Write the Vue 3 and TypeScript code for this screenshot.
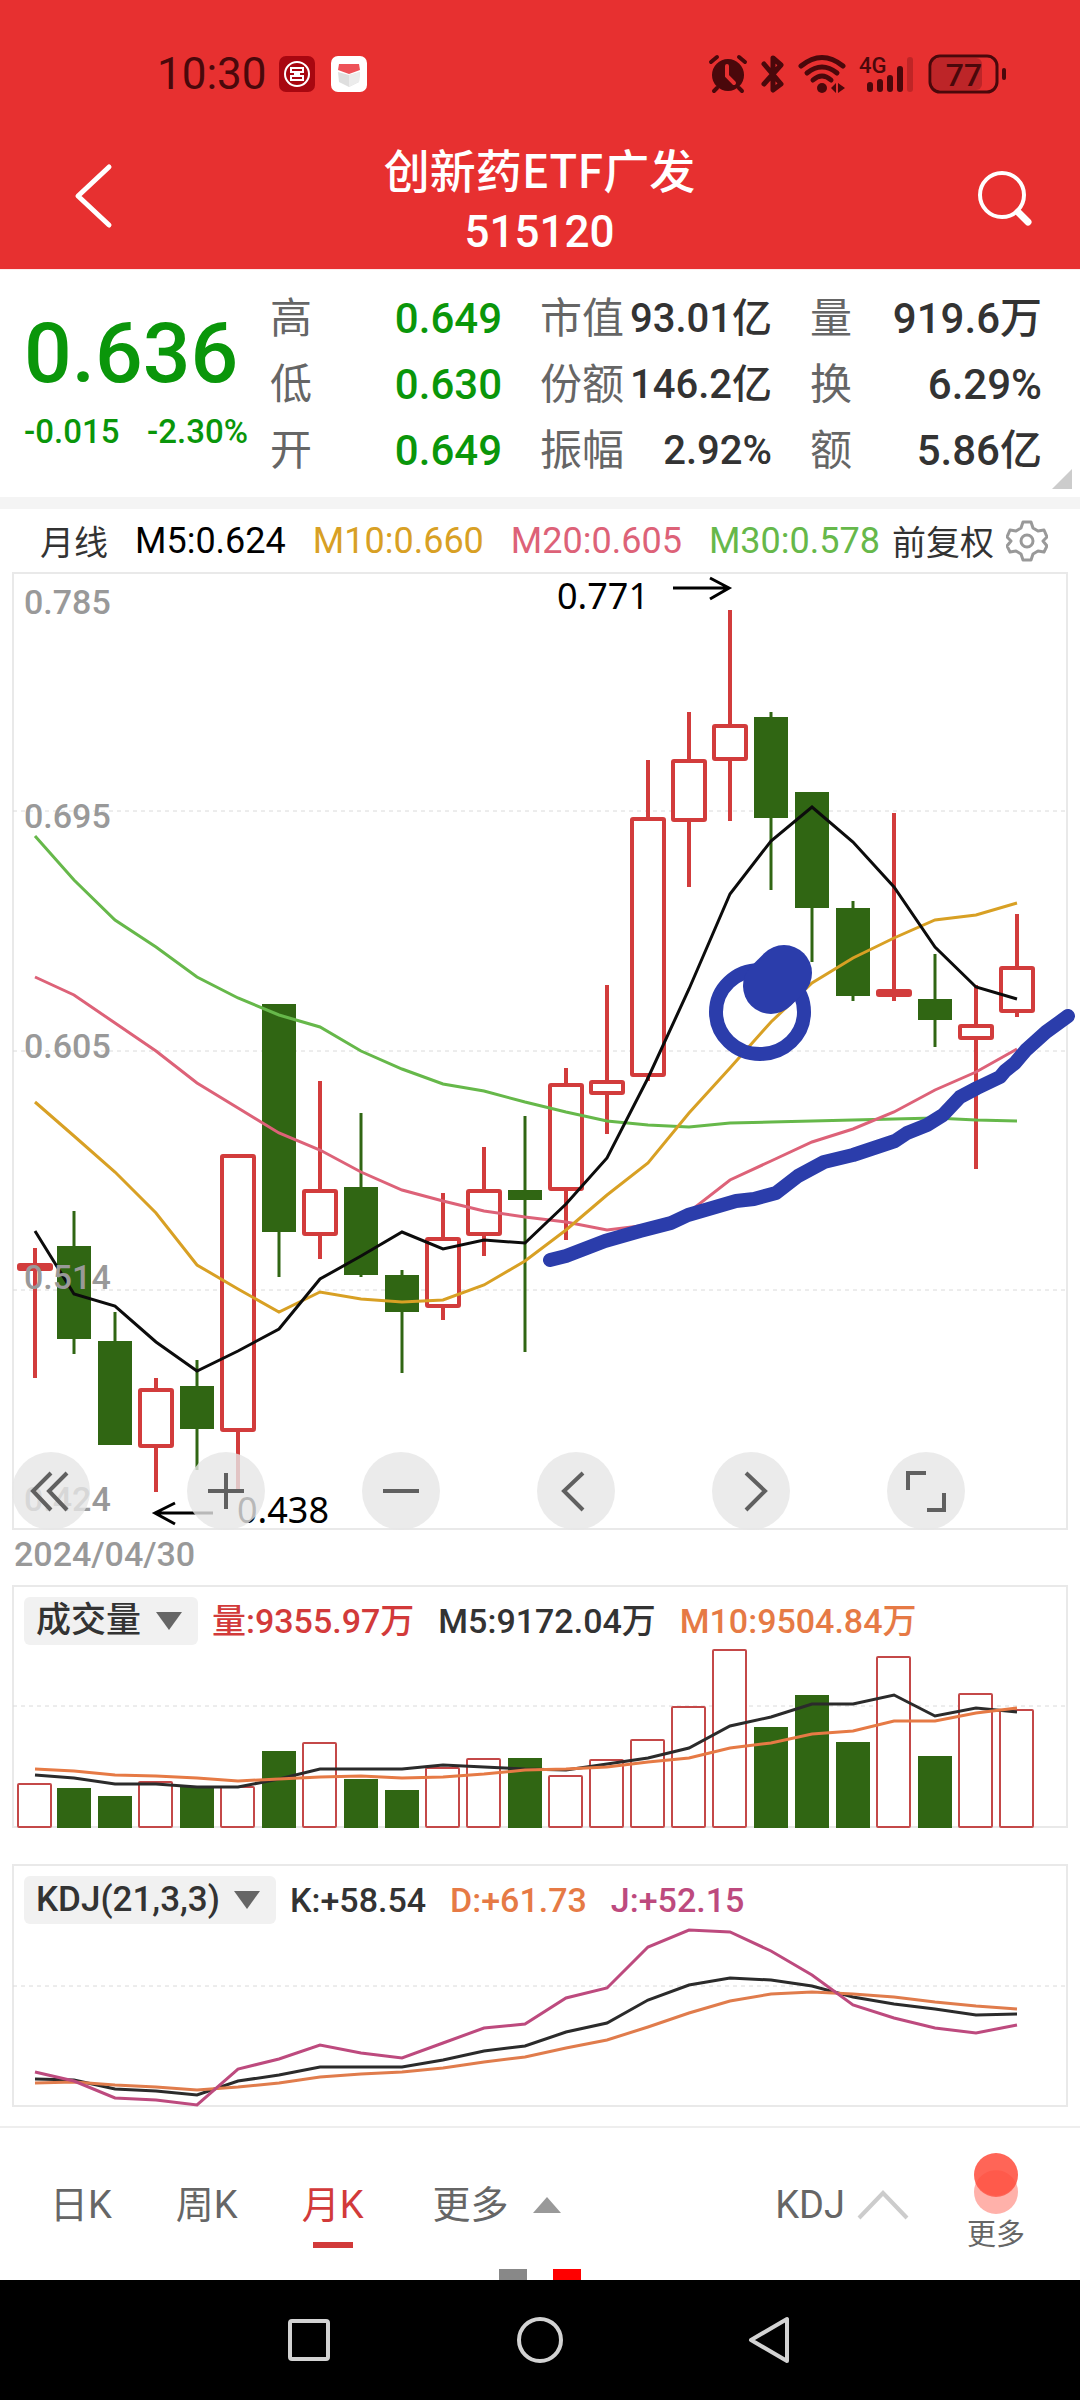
<script setup lang="ts">
import { ref } from 'vue'

type Kind = 'r' | 'g'
interface Candle {
  kind: Kind
  high: number
  low: number
  top: number
  bottom: number
  volume: number
}

const raw: [Kind, number, number, number, number, number][] = [
  ['r', 1248, 1378, 1263, 1271, 1784],
  ['g', 1211, 1354, 1246, 1339, 1788],
  ['g', 1312, 1445, 1341, 1445, 1796],
  ['r', 1378, 1492, 1388, 1448, 1782],
  ['g', 1360, 1470, 1386, 1429, 1787],
  ['r', 1154, 1492, 1154, 1432, 1787],
  ['g', 1004, 1277, 1004, 1232, 1751],
  ['r', 1081, 1259, 1189, 1236, 1743],
  ['g', 1113, 1277, 1187, 1275, 1779],
  ['g', 1270, 1373, 1275, 1312, 1790],
  ['r', 1193, 1320, 1237, 1308, 1768],
  ['r', 1147, 1256, 1189, 1236, 1759],
  ['g', 1116, 1352, 1190, 1200, 1758],
  ['r', 1068, 1240, 1083, 1191, 1776],
  ['r', 985, 1134, 1080, 1095, 1760],
  ['r', 760, 1081, 817, 1077, 1740],
  ['r', 712, 887, 759, 822, 1707],
  ['r', 610, 821, 724, 761, 1650],
  ['g', 712, 890, 717, 818, 1727],
  ['g', 792, 962, 792, 908, 1695],
  ['g', 901, 1001, 908, 996, 1742],
  ['r', 813, 1001, 989, 997, 1657],
  ['g', 954, 1047, 999, 1020, 1756],
  ['r', 985, 1169, 1024, 1040, 1694],
  ['r', 914, 1017, 966, 1013, 1710],
]
const candles: Candle[] = raw.map(([kind, high, low, top, bottom, volume]) => ({ kind, high, low, top, bottom, volume }))

const cx = (i: number) => (i === 0 ? 35 : Math.round(73.8 + 40.99 * (i - 1)))
const line = (ys: number[]) => ys.map((y, i) => `${cx(i)},${y}`).join(' ')

const priceLines = [
  { color: '#66b84a', points: line([836, 880, 920, 947, 977, 998, 1015, 1027, 1051, 1069, 1084, 1091, 1102, 1112, 1121, 1125, 1127, 1123, 1122, 1121, 1120, 1119, 1118, 1120, 1121]) },
  { color: '#dd6278', points: line([977, 995, 1023, 1051, 1083, 1108, 1133, 1150, 1172, 1190, 1201, 1211, 1217, 1222, 1230, 1225, 1212, 1180, 1161, 1142, 1129, 1112, 1090, 1072, 1049]) },
  { color: '#d8a024', points: line([1102, 1136, 1172, 1213, 1265, 1289, 1312, 1292, 1299, 1302, 1300, 1285, 1261, 1230, 1195, 1163, 1113, 1068, 1022, 983, 958, 938, 920, 915, 903]) },
  { color: '#0c0c0c', points: line([1231, 1294, 1306, 1342, 1371, 1351, 1329, 1279, 1256, 1232, 1249, 1240, 1243, 1204, 1158, 1078, 989, 894, 841, 807, 842, 887, 947, 987, 999]) },
]
const volumeLines = [
  { color: '#2b2b2b', points: line([1775, 1778, 1784, 1784, 1787, 1787, 1779, 1769, 1769, 1769, 1765, 1767, 1769, 1770, 1764, 1758, 1748, 1726, 1717, 1704, 1704, 1695, 1716, 1708, 1712]) },
  { color: '#e67a45', points: line([1769, 1771, 1775, 1776, 1778, 1781, 1779, 1777, 1776, 1778, 1777, 1774, 1770, 1769, 1767, 1762, 1758, 1748, 1743, 1734, 1731, 1721, 1721, 1713, 1708]) },
]
const kdjLines = [
  { color: '#2b2b2b', points: line([2079, 2080, 2089, 2091, 2095, 2081, 2075, 2067, 2067, 2067, 2060, 2051, 2046, 2032, 2023, 2000, 1985, 1978, 1980, 1986, 1997, 2004, 2009, 2015, 2014]) },
  { color: '#e07c4c', points: line([2083, 2082, 2085, 2087, 2090, 2087, 2083, 2077, 2074, 2072, 2068, 2062, 2057, 2048, 2040, 2027, 2013, 2001, 1994, 1992, 1994, 1997, 2002, 2006, 2009]) },
  { color: '#bd4a7e', points: line([2072, 2081, 2098, 2100, 2105, 2069, 2059, 2045, 2053, 2058, 2043, 2028, 2024, 1998, 1988, 1947, 1930, 1932, 1951, 1975, 2005, 2018, 2028, 2033, 2025]) },
]

const axis = [
  { text: '0.785', y: 614 },
  { text: '0.695', y: 828 },
  { text: '0.605', y: 1058 },
  { text: '0.514', y: 1289 },
  { text: '0.424', y: 1511 },
]

const metrics = [
  [
    { label: '高', value: '0.649' },
    { label: '低', value: '0.630' },
    { label: '开', value: '0.649' },
  ],
  [
    { label: '市值', value: '93.01亿' },
    { label: '份额', value: '146.2亿' },
    { label: '振幅', value: '2.92%' },
  ],
  [
    { label: '量', value: '919.6万' },
    { label: '换', value: '6.29%' },
    { label: '额', value: '5.86亿' },
  ],
]

const tools = [
  { name: '最早', d: 'M39 21 21 39 39 58M55 21 37 39 55 58' },
  { name: '放大', d: 'M21 39H57M39 21V57' },
  { name: '缩小', d: 'M21 39H57' },
  { name: '左移', d: 'M46 21 27 39 46 58' },
  { name: '右移', d: 'M34 21 53 39 34 58' },
  { name: '全屏', d: 'M39 21H21V38M40 58H57V41' },
]

const periods = ['日K', '周K', '月K']
const period = ref('月K')
const volumeType = ref('成交量')
const indicator = ref('KDJ(21,3,3)')
</script>

<template>
  <div class="screen">
    <header class="top">
      <div class="status">
        <span class="clock">10:30</span>
        <svg class="app" viewBox="0 0 36 36" width="36" height="36">
          <rect width="36" height="36" rx="7" fill="#a80710" />
          <circle cx="18" cy="18" r="12" fill="none" stroke="#fff" stroke-width="2" />
          <path d="M12 12H24V16H20V20H24V24H12V20H16V16H12ZM18 15V21" stroke="#fff" stroke-width="2" fill="none" />
        </svg>
        <svg class="app" viewBox="0 0 36 36" width="36" height="36">
          <rect width="36" height="36" rx="7" fill="#fff" />
          <path d="M7 16 18 19 29 16 28 26 18 31 8 26Z" fill="#dedede" />
          <path d="M18 19 29 16 28 26 18 31Z" fill="#ececec" />
          <path d="M8 8H28L29 14 18 18 7 14Z" fill="#ee5258" />
        </svg>
        <div class="signals">
          <svg viewBox="0 0 40 40" width="40" height="40">
            <circle cx="20" cy="21" r="16" fill="#4a080b" />
            <path d="M3 8 9 3M31 3 37 8M9 34 6 37M31 34 34 37" stroke="#4a080b" stroke-width="4" stroke-linecap="round" />
            <path d="M19 12V22L26 29" fill="none" stroke="#e73030" stroke-width="4" stroke-linecap="round" />
          </svg>
          <svg viewBox="0 0 24 40" width="24" height="40">
            <path d="M3 10 20 30 12 36V4L20 11 3 30" fill="none" stroke="#4a080b" stroke-width="5" stroke-linecap="round" stroke-linejoin="round" />
          </svg>
          <svg viewBox="0 0 48 40" width="48" height="40">
            <g fill="none" stroke="#4a080b" stroke-width="5" stroke-linecap="round">
              <path d="M3 12Q24-5 45 12" />
              <path d="M9 19Q24 7 39 19" />
              <path d="M15 26Q24 18 33 26" />
            </g>
            <circle cx="24" cy="34" r="5" fill="#4a080b" />
            <path d="M33 34 38 29V39ZM40 29 47 34 40 39Z" fill="#4a080b" />
          </svg>
          <svg viewBox="0 0 56 40" width="56" height="40">
            <text x="0" y="19" class="net">4G</text>
            <g stroke="#4a080b" stroke-width="6" stroke-linecap="round">
              <path d="M11 31V35M21 28V35M31 24V35M41 15V35" />
              <path d="M51 6V35" opacity="0.25" />
            </g>
          </svg>
          <svg viewBox="0 0 80 40" width="80" height="40">
            <rect x="4" y="4" width="50" height="32" rx="6" fill="#bd2528" />
            <rect x="2" y="2" width="67" height="36" rx="10" fill="none" stroke="#4a080b" stroke-width="3" />
            <path d="M76 16V24" stroke="#4a080b" stroke-width="4" stroke-linecap="round" />
            <text x="36" y="32" text-anchor="middle" class="charge">77</text>
          </svg>
        </div>
      </div>
      <div class="titlebar">
        <button class="icon" aria-label="返回">
          <svg viewBox="0 0 64 80" width="64" height="80">
            <path d="M43 11 12 40 43 69" fill="none" stroke="#fff" stroke-width="5" stroke-linecap="round" stroke-linejoin="round" />
          </svg>
        </button>
        <h1>创新药ETF广发<span>515120</span></h1>
        <button class="icon" aria-label="搜索">
          <svg viewBox="0 0 64 80" width="64" height="80">
            <circle cx="31" cy="39" r="22" fill="none" stroke="#fff" stroke-width="4" />
            <path d="M47 56 57 66" stroke="#fff" stroke-width="7" stroke-linecap="round" />
          </svg>
        </button>
      </div>
    </header>

    <section class="quote">
      <div class="price">
        <strong>0.636</strong>
        <div class="change"><span>-0.015</span><span>-2.30%</span></div>
      </div>
      <div class="metrics">
        <dl v-for="(col, c) in metrics" :key="c" :class="{ down: c === 0, tight: c === 1 }">
          <div v-for="m in col" :key="m.label">
            <dt>{{ m.label }}</dt>
            <dd>{{ m.value }}</dd>
          </div>
        </dl>
      </div>
      <svg class="corner" viewBox="0 0 20 20" width="20" height="20"><path d="M20 0V20H0Z" fill="#ccc" /></svg>
    </section>

    <div class="averages">
      <span class="cn">月线</span>
      <span class="black">M5:0.624</span>
      <span class="gold">M10:0.660</span>
      <span class="pink">M20:0.605</span>
      <span class="green">M30:0.578</span>
      <span class="cn adjust">前复权</span>
      <button class="gear" aria-label="设置">
        <svg viewBox="0 0 42 42" width="42" height="42" fill="none" stroke="#999" stroke-width="3" stroke-linejoin="round">
          <path d="M17 2H25L27 8 32 11 38 10 41 17 37 21 41 26 38 32 32 31 27 34 25 40H17L15 34 10 31 4 32 1 26 5 21 1 17 4 10 10 11 15 8Z" />
          <circle cx="21" cy="21" r="6" />
        </svg>
      </button>
    </div>

    <section class="chart">
      <svg class="plot" viewBox="0 572 1080 960">
        <g class="frame">
          <rect x="13" y="573" width="1054" height="956" />
          <path class="dash" d="M13 811H1066M13 1051H1066M13 1290H1066" />
        </g>
        <g v-for="(c, i) in candles" :key="i">
          <template v-if="c.kind === 'g'">
            <path :d="`M${cx(i)} ${c.high}V${c.low}`" stroke="#306613" stroke-width="3" />
            <rect :x="cx(i) - 17" :y="c.top" width="34" :height="c.bottom - c.top" fill="#306613" />
          </template>
          <template v-else>
            <path :d="`M${cx(i)} ${c.high}V${c.top}M${cx(i)} ${c.bottom}V${c.low}`" stroke="#d23c3c" stroke-width="4" />
            <rect :x="cx(i) - 16" :y="c.top + 2" width="32" :height="c.bottom - c.top - 4" rx="1" fill="#fff" stroke="#d23c3c" stroke-width="4" />
          </template>
        </g>
        <polyline v-for="l in priceLines" :key="l.color" class="curve" :points="l.points" :stroke="l.color" />
        <text v-for="a in axis" :key="a.text" class="axis" x="24" :y="a.y">{{ a.text }}</text>
        <g class="mark">
          <text x="557" y="609">0.771</text>
          <path d="M673 588H728M710 578 729 588 710 599" />
          <text x="237" y="1523">0.438</text>
          <path d="M213 1513H156M175 1503 155 1513 175 1524" />
        </g>
        <g class="brush">
          <ellipse cx="760" cy="1012" rx="44" ry="42" />
          <path class="blob" d="M784 973 771 986" />
          <path d="M550 1260 566 1256 605 1241 640 1231 671 1223 688 1215 736 1201 754 1199 776 1193 798 1176 824 1162 853 1155 895 1141 907 1133 927 1125 943 1115 960 1097 977 1088 1000 1077 1005 1071 1015 1063 1026 1050 1046 1032 1068 1016" />
        </g>
      </svg>
      <div class="tools">
        <button v-for="t in tools" :key="t.name" :aria-label="t.name">
          <svg viewBox="0 0 78 78" width="78" height="78"><path :d="t.d" /></svg>
        </button>
      </div>
    </section>
    <time class="date">2024/04/30</time>

    <section class="panel">
      <svg class="plot" viewBox="0 1585 1080 244">
        <g class="frame">
          <rect x="13" y="1586" width="1054" height="241" />
          <path class="dash" d="M13 1706H1066" />
        </g>
        <template v-for="(c, i) in candles" :key="i">
          <rect v-if="c.kind === 'g'" :x="cx(i) - 17" :y="c.volume" width="34" :height="1828 - c.volume" fill="#306613" />
          <rect v-else :x="cx(i) - 17" :y="c.volume" width="33" :height="1827 - c.volume" rx="1" fill="#fff" stroke="#c44848" stroke-width="2" />
        </template>
        <polyline v-for="l in volumeLines" :key="l.color" class="curve" :points="l.points" :stroke="l.color" />
      </svg>
      <div class="legend">
        <div class="picker">
          <select v-model="volumeType" aria-label="副图一"><option>成交量</option></select>
          <svg viewBox="0 0 26 18" width="26" height="18"><path d="M0 0H26L13 18Z" fill="#666" /></svg>
        </div>
        <span class="red">量:9355.97万</span>
        <span class="dark">M5:9172.04万</span>
        <span class="orange">M10:9504.84万</span>
      </div>
    </section>

    <section class="panel">
      <svg class="plot" viewBox="0 1864 1080 244">
        <g class="frame">
          <rect x="13" y="1865" width="1054" height="241" />
          <path class="dash" d="M13 1986H1066" />
        </g>
        <polyline v-for="l in kdjLines" :key="l.color" class="curve" :points="l.points" :stroke="l.color" />
      </svg>
      <div class="legend">
        <div class="picker">
          <select v-model="indicator" aria-label="副图二"><option>KDJ(21,3,3)</option></select>
          <svg viewBox="0 0 26 18" width="26" height="18"><path d="M0 0H26L13 18Z" fill="#666" /></svg>
        </div>
        <span class="dark">K:+58.54</span>
        <span class="orange">D:+61.73</span>
        <span class="plum">J:+52.15</span>
      </div>
    </section>

    <footer class="bottom">
      <div class="bar">
        <nav class="tabs">
          <button v-for="p in periods" :key="p" :class="{ active: p === period }" @click="period = p">{{ p }}</button>
        </nav>
        <button class="more">
          更多
          <svg viewBox="0 0 28 16" width="28" height="16"><path d="M14 0 28 16H0Z" fill="#999" /></svg>
        </button>
        <button class="kdj">
          KDJ
          <svg viewBox="0 0 52 30" width="52" height="30"><path d="M2 28 26 3 50 28" fill="none" stroke="#ccc" stroke-width="4" /></svg>
        </button>
        <button class="extra">
          <svg viewBox="0 0 46 62" width="46" height="62">
            <circle cx="23" cy="39" r="22" fill="#ffb1aa" />
            <circle cx="23" cy="22" r="22" fill="#ff6557" />
            <path d="M3 30A22 22 0 0 1 43 30 22 22 0 0 1 3 30Z" fill="#ff5a4b" />
          </svg>
          更多
        </button>
      </div>
      <div class="pages"><i></i><i class="on"></i></div>
    </footer>

    <nav class="system">
      <button aria-label="最近任务">
        <svg viewBox="0 0 48 48" width="48" height="48"><rect x="5" y="5" width="38" height="38" rx="2" /></svg>
      </button>
      <button aria-label="主页">
        <svg viewBox="0 0 48 48" width="48" height="48"><circle cx="24" cy="24" r="21" /></svg>
      </button>
      <button aria-label="返回上一页">
        <svg viewBox="0 0 48 48" width="48" height="48"><path d="M40 3V45L4 24Z" /></svg>
      </button>
    </nav>
  </div>
</template>

<style>
body {
  margin: 0;
  background: #fff;
}
</style>

<style scoped>
.screen {
  font-family: Roboto, 'Noto Sans CJK SC', sans-serif;
  color: #333;
  background: #fff;
}
button {
  border: 0;
  padding: 0;
  margin: 0;
  background: none;
  font: inherit;
  color: inherit;
}
svg {
  display: block;
  flex: none;
}
.top {
  background: #e73030;
  padding-top: 48px;
}
.status {
  display: flex;
  align-items: center;
  height: 52px;
  padding: 0 72px 0 157px;
  gap: 16px;
}
.clock {
  font-size: 44px;
  line-height: 52px;
  color: #4a080b;
  margin-right: -4px;
}
.signals {
  display: flex;
  align-items: center;
  gap: 13px;
  margin-left: auto;
}
.net {
  font-size: 22px;
  font-weight: 500;
  fill: #4a080b;
}
.charge {
  font-size: 32px;
  font-weight: 500;
  fill: #4a080b;
}
.titlebar {
  box-sizing: border-box;
  display: flex;
  align-items: center;
  justify-content: space-between;
  height: 169px;
  padding: 22px 45px 0 66px;
}
h1 {
  margin: 0;
  padding-top: 10px;
  padding-right: 22px;
  display: flex;
  flex-direction: column;
  align-items: center;
  font-family: 'Noto Sans CJK SC', sans-serif;
  font-size: 46px;
  line-height: 62px;
  font-weight: 500;
  color: #fff;
}
h1 span {
  font-family: Roboto, sans-serif;
  font-size: 44px;
  line-height: 66px;
}
.quote {
  position: relative;
  display: flex;
  height: 227px;
  border-top: 1px solid #fdeaea;
  border-bottom: 12px solid #f4f4f4;
  box-sizing: content-box;
}
.price {
  width: 25%;
  box-sizing: border-box;
  padding: 39px 22px 0 24px;
  color: #0a960a;
}
.price strong {
  display: block;
  font-size: 84px;
  line-height: 90px;
  font-weight: 500;
}
.change {
  display: flex;
  justify-content: space-between;
  margin-top: 13px;
  font-size: 33px;
  line-height: 40px;
  font-weight: 500;
}
.metrics {
  flex: 1;
  display: grid;
  grid-template-columns: repeat(3, 1fr);
  gap: 38px;
  padding: 16px 38px 0 0;
  font-size: 42px;
  line-height: 66px;
}
dl {
  margin: 0;
}
dl div {
  display: flex;
  justify-content: space-between;
  white-space: nowrap;
}
dt {
  color: #666;
}
dd {
  margin: 0;
  font-weight: 500;
}
.tight dd {
  font-size: 40px;
}
.down dd {
  color: #0a960a;
}
.corner {
  position: absolute;
  right: 8px;
  bottom: 8px;
}
.averages {
  display: flex;
  align-items: center;
  height: 63px;
  padding-left: 40px;
  gap: 27px;
  font-size: 36px;
  white-space: nowrap;
}
.cn {
  font-size: 34px;
}
.adjust,
.gear {
  margin-left: -15px;
}
.black {
  color: #000;
}
.gold {
  color: #d8a024;
}
.pink {
  color: #dd6278;
}
.green {
  color: #66b84a;
}
.chart {
  position: relative;
}
.plot {
  width: 100%;
  height: auto;
}
.frame {
  fill: none;
  stroke: #e9e9e9;
  stroke-width: 2;
}
.dash {
  stroke: #dadada;
  stroke-width: 1;
  stroke-dasharray: 4 4;
}
.curve {
  fill: none;
  stroke-width: 3;
}
.axis {
  font-size: 34px;
  font-weight: 500;
  fill: #999;
}
.mark text {
  font-family: 'Noto Sans', sans-serif;
  font-size: 36px;
}
.mark path {
  fill: none;
  stroke: #000;
  stroke-width: 3;
}
.brush {
  fill: none;
  stroke: #2b3dab;
  stroke-width: 14;
  stroke-linecap: round;
  stroke-linejoin: round;
}
.brush .blob {
  stroke-width: 56;
}
.tools {
  position: absolute;
  left: 0;
  right: 0;
  bottom: 2px;
  display: flex;
  justify-content: space-between;
  padding: 0 115px 0 12px;
}
.tools button {
  border-radius: 50%;
  background: rgba(230, 230, 230, 0.8);
}
.tools path {
  fill: none;
  stroke: #606060;
  stroke-width: 4;
}
.date {
  display: block;
  padding: 0 14px;
  margin-bottom: 9px;
  font-size: 34px;
  line-height: 44px;
  font-weight: 500;
  color: #999;
}
.panel {
  display: grid;
  margin-bottom: 35px;
}
.panel > * {
  grid-area: 1 / 1;
}
.panel + .panel {
  margin-bottom: 18px;
}
.legend {
  display: flex;
  align-items: center;
  align-self: start;
  gap: 24px;
  padding: 12px 24px 0;
  font-size: 34px;
  font-weight: 500;
  line-height: 48px;
  white-space: nowrap;
}
.picker {
  display: grid;
  align-items: center;
  margin-right: -10px;
  font-size: 35px;
}
.picker > * {
  grid-area: 1 / 1;
}
.picker svg {
  justify-self: end;
  margin-right: 16px;
  pointer-events: none;
}
select {
  appearance: none;
  border: 0;
  margin: 0;
  height: 48px;
  padding: 0 56px 0 12px;
  border-radius: 6px;
  background: #f1f1f1;
  font: inherit;
  color: #333;
}
.red {
  color: #d23a3a;
}
.dark {
  color: #333;
}
.orange {
  color: #e67a45;
}
.plum {
  color: #bd4a7e;
}
.bottom {
  border-top: 2px solid #eee;
  color: #666;
}
.bar {
  display: flex;
  align-items: flex-start;
  height: 141px;
  padding: 0 55px 0 50px;
  font-size: 38px;
  line-height: 44px;
}
.tabs {
  display: flex;
  gap: 64px;
  padding-top: 55px;
}
.tabs button {
  display: flex;
  flex-direction: column;
  align-items: center;
  gap: 15px;
}
.tabs button::after {
  content: '';
  width: 40px;
  height: 6px;
}
.tabs .active {
  color: #d23a3a;
}
.tabs .active::after {
  background: #d23a3a;
}
.more,
.kdj {
  display: flex;
  align-items: center;
  padding-top: 55px;
}
.more {
  gap: 24px;
  margin-left: 69px;
}
.kdj {
  gap: 12px;
  margin-left: auto;
}
.extra {
  display: flex;
  flex-direction: column;
  align-items: center;
  padding-top: 25px;
  margin-left: 58px;
  font-size: 29px;
  line-height: 40px;
}
.pages {
  display: flex;
  justify-content: center;
  gap: 26px;
}
.pages i {
  width: 28px;
  height: 11px;
  background: #888;
}
.pages .on {
  background: #f00;
}
.system {
  display: flex;
  justify-content: center;
  align-items: center;
  gap: 183px;
  height: 120px;
  background: #000;
}
.system svg {
  fill: none;
  stroke: #d2d2d2;
  stroke-width: 4;
  stroke-linejoin: round;
}
</style>
